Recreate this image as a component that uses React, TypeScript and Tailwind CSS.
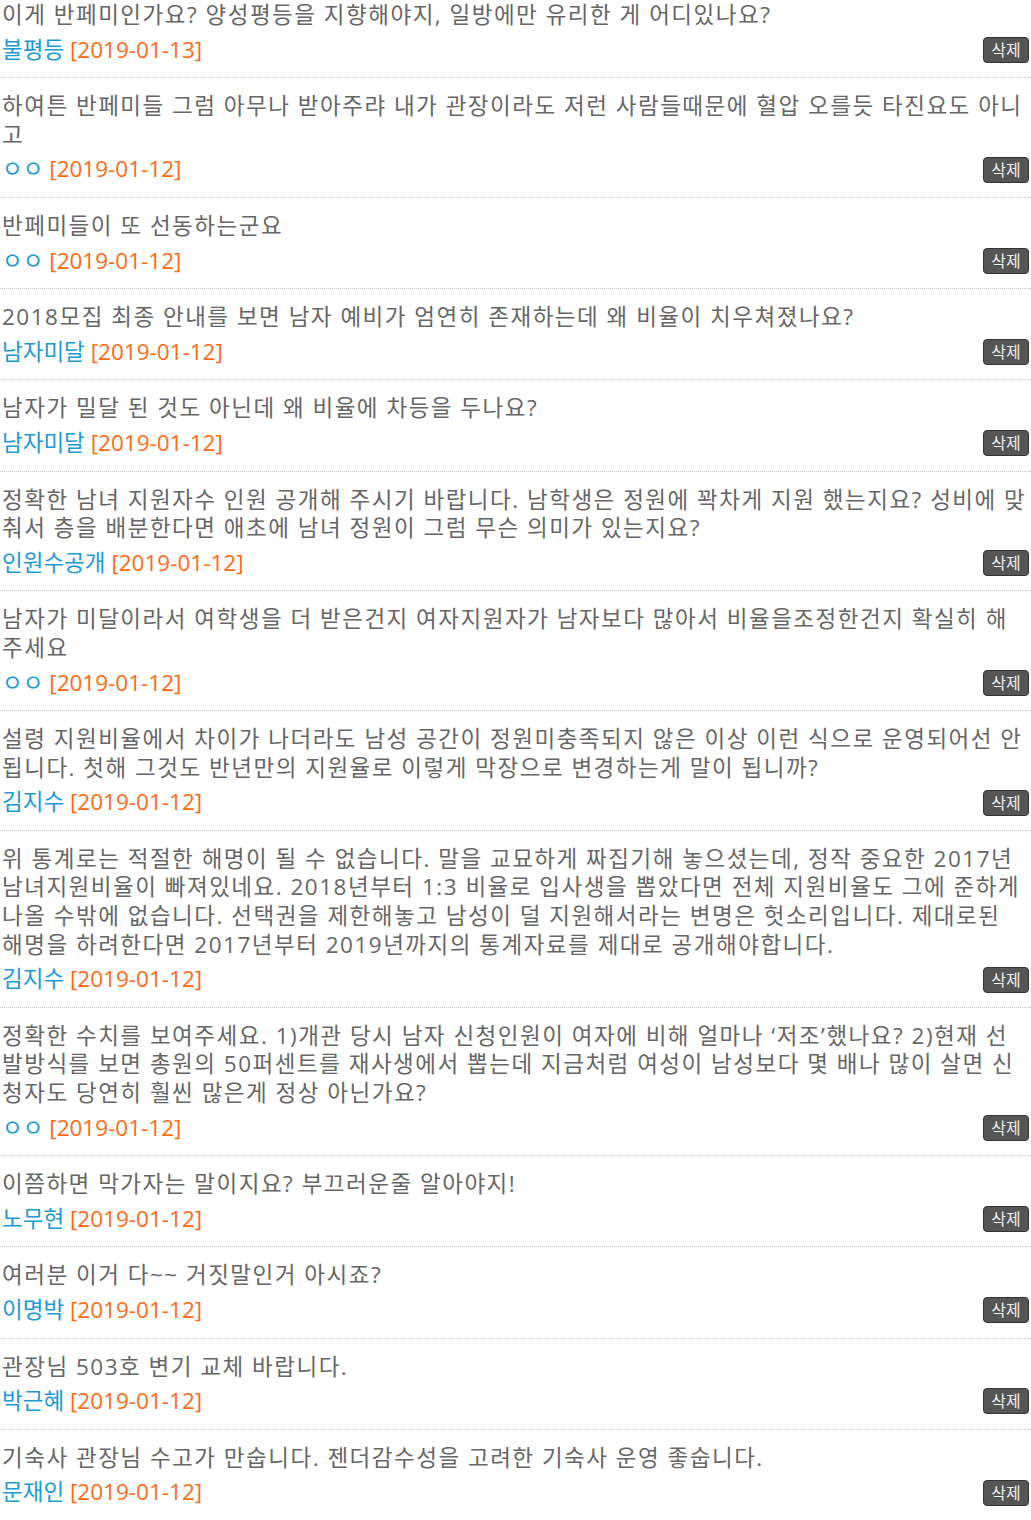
import React from 'react';

type Comment = {
  text: string;
  name: string;
  date: string;
};

const comments: Comment[] = [
  { text: '이게 반페미인가요? 양성평등을 지향해야지, 일방에만 유리한 게 어디있나요?', name: '불평등', date: '2019-01-13' },
  { text: '하여튼 반페미들 그럼 아무나 받아주랴 내가 관장이라도 저런 사람들때문에 혈압 오를듯 타진요도 아니고', name: 'ㅇㅇ', date: '2019-01-12' },
  { text: '반페미들이 또 선동하는군요', name: 'ㅇㅇ', date: '2019-01-12' },
  { text: '2018모집 최종 안내를 보면 남자 예비가 엄연히 존재하는데 왜 비율이 치우쳐졌나요?', name: '남자미달', date: '2019-01-12' },
  { text: '남자가 밀달 된 것도 아닌데 왜 비율에 차등을 두나요?', name: '남자미달', date: '2019-01-12' },
  { text: '정확한 남녀 지원자수 인원 공개해 주시기 바랍니다. 남학생은 정원에 꽉차게 지원 했는지요? 성비에 맞춰서 층을 배분한다면 애초에 남녀 정원이 그럼 무슨 의미가 있는지요?', name: '인원수공개', date: '2019-01-12' },
  { text: '남자가 미달이라서 여학생을 더 받은건지 여자지원자가 남자보다 많아서 비율을조정한건지 확실히 해주세요', name: 'ㅇㅇ', date: '2019-01-12' },
  { text: '설령 지원비율에서 차이가 나더라도 남성 공간이 정원미충족되지 않은 이상 이런 식으로 운영되어선 안됩니다. 첫해 그것도 반년만의 지원율로 이렇게 막장으로 변경하는게 말이 됩니까?', name: '김지수', date: '2019-01-12' },
  { text: '위 통계로는 적절한 해명이 될 수 없습니다. 말을 교묘하게 짜집기해 놓으셨는데, 정작 중요한 2017년 남녀지원비율이 빠져있네요. 2018년부터 1:3 비율로 입사생을 뽑았다면 전체 지원비율도 그에 준하게 나올 수밖에 없습니다. 선택권을 제한해놓고 남성이 덜 지원해서라는 변명은 헛소리입니다. 제대로된 해명을 하려한다면 2017년부터 2019년까지의 통계자료를 제대로 공개해야합니다.', name: '김지수', date: '2019-01-12' },
  { text: '정확한 수치를 보여주세요. 1)개관 당시 남자 신청인원이 여자에 비해 얼마나 ‘저조’했나요? 2)현재 선발방식를 보면 총원의 50퍼센트를 재사생에서 뽑는데 지금처럼 여성이 남성보다 몇 배나 많이 살면 신청자도 당연히 훨씬 많은게 정상 아닌가요?', name: 'ㅇㅇ', date: '2019-01-12' },
  { text: '이쯤하면 막가자는 말이지요? 부끄러운줄 알아야지!', name: '노무현', date: '2019-01-12' },
  { text: '여러분 이거 다~~ 거짓말인거 아시죠?', name: '이명박', date: '2019-01-12' },
  { text: '관장님 503호 변기 교체 바랍니다.', name: '박근혜', date: '2019-01-12' },
  { text: '기숙사 관장님 수고가 만숩니다. 젠더감수성을 고려한 기숙사 운영 좋숩니다.', name: '문재인', date: '2019-01-12' },
];

const CommentRow: React.FC<{ item: Comment; first: boolean }> = ({ item, first }) => (
  <li
    className={`border-b border-dotted border-[#c8c8c8] pl-[2px] pr-[2px] pb-[13px] ${first ? 'pt-px' : 'pt-[14px]'}`}
  >
    <p className="text-[#666] tracking-[1.5px] break-all">{item.text}</p>
    <div className="mt-[6px] flex items-center justify-between">
      <span>
        <span className="text-[#1a9bd4]">{item.name}</span>{' '}
        <span className="text-[#ff6a13]">[{item.date}]</span>
      </span>
      <button
        type="button"
        className="h-[26px] w-[46px] rounded-[4px] border border-[#333] bg-[#555] text-[16px] leading-none text-[#f0f0f0]"
      >
        삭제
      </button>
    </div>
  </li>
);

export default function App() {
  return (
    <div
      className="w-[1031px] bg-white text-[22.5px] leading-[28.6px]"
      style={{ fontFamily: '"Open Sans", "Noto Sans CJK KR", sans-serif' }}
    >
      <ul>
        {comments.map((c, i) => (
          <CommentRow key={i} item={c} first={i === 0} />
        ))}
      </ul>
    </div>
  );
}
